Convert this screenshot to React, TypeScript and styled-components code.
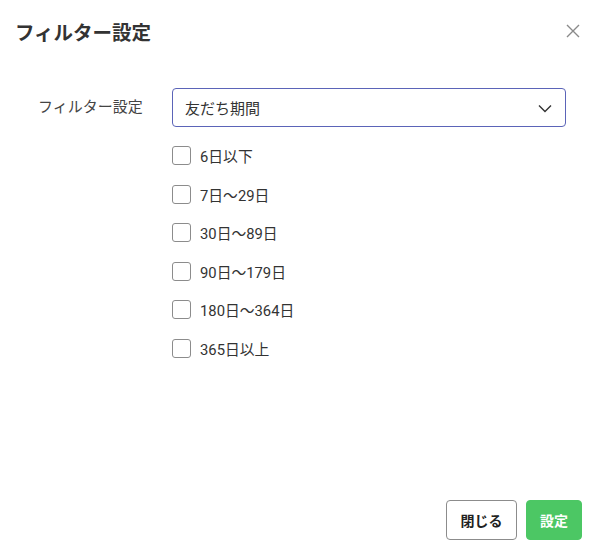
import styled, { createGlobalStyle } from "styled-components";

const GlobalStyle = createGlobalStyle`
  html, body {
    margin: 0;
    padding: 0;
    background: #ffffff;
  }
  body {
    font-family: Roboto, "Noto Sans CJK JP", sans-serif;
    color: #333333;
  }
`;

const Modal = styled.div`
  width: 598px;
  height: 551px;
  display: flex;
  flex-direction: column;
  background: #ffffff;
  box-sizing: border-box;
`;

const Header = styled.div`
  height: 62px;
  display: flex;
  align-items: center;
  justify-content: space-between;
  padding: 0 16px 0 15px;
  box-sizing: border-box;
`;

const Title = styled.h1`
  margin: 0;
  font-size: 19.5px;
  font-weight: 700;
  color: #333333;
`;

const CloseButton = styled.button`
  border: none;
  background: none;
  padding: 0;
  width: 18px;
  height: 18px;
  display: flex;
  align-items: center;
  justify-content: center;
  color: #8a8a8a;
  cursor: pointer;
`;

const Body = styled.div`
  flex: 1;
  padding: 26px 32px 0 38px;
`;

const FormRow = styled.div`
  display: flex;
  align-items: flex-start;
`;

const Label = styled.div`
  width: 134px;
  flex-shrink: 0;
  height: 39px;
  line-height: 39px;
  font-size: 15px;
  color: #444444;
`;

const Field = styled.div`
  flex: 1;
  display: flex;
  flex-direction: column;
`;

const Select = styled.div`
  height: 39px;
  box-sizing: border-box;
  border: 1px solid #5b64b8;
  border-radius: 4px;
  display: flex;
  align-items: center;
  justify-content: space-between;
  padding: 0 12px 0 12px;
  font-size: 15px;
  color: #333333;
`;

const OptionList = styled.div`
  display: flex;
  flex-direction: column;
  gap: 19.5px;
  padding-top: 19px;
`;

const Option = styled.label`
  display: flex;
  align-items: center;
  gap: 9px;
  height: 19px;
  font-size: 14.8px;
  color: #333333;
`;

const Box = styled.span`
  width: 19px;
  height: 19px;
  flex-shrink: 0;
  box-sizing: border-box;
  border: 1px solid #8c8c8c;
  border-radius: 3px;
  background: #ffffff;
`;

const Footer = styled.div`
  display: flex;
  justify-content: flex-end;
  gap: 9px;
  padding: 0 16px 11px 0;
`;

const Button = styled.button<{ $primary?: boolean }>`
  height: 40px;
  padding: 0 ${(p) => (p.$primary ? "13px" : "13.5px")};
  border-radius: 4px;
  font-family: Roboto, "Noto Sans CJK JP", sans-serif;
  font-size: 14px;
  font-weight: 700;
  box-sizing: border-box;
  border: 1px solid ${(p) => (p.$primary ? "#4cc764" : "#8c8c8c")};
  background: ${(p) => (p.$primary ? "#4cc764" : "#ffffff")};
  color: ${(p) => (p.$primary ? "#ffffff" : "#222222")};
  cursor: pointer;
`;

const options = [
  "6日以下",
  "7日〜29日",
  "30日〜89日",
  "90日〜179日",
  "180日〜364日",
  "365日以上",
];

const App = () => {
  return (
    <>
      <GlobalStyle />
      <Modal>
        <Header>
          <Title>フィルター設定</Title>
          <CloseButton aria-label="close">
            <svg width="14" height="14" viewBox="0 0 14 14" fill="none" stroke="currentColor" strokeWidth="1.4">
              <path d="M1 1 13 13M13 1 1 13" />
            </svg>
          </CloseButton>
        </Header>
        <Body>
          <FormRow>
            <Label>フィルター設定</Label>
            <Field>
              <Select>
                <span>友だち期間</span>
                <svg width="16" height="16" viewBox="0 0 16 16" fill="none" stroke="#333" strokeWidth="1.4">
                  <path d="M2 5.5 8 11.5 14 5.5" />
                </svg>
              </Select>
              <OptionList>
                {options.map((o) => (
                  <Option key={o}>
                    <Box />
                    {o}
                  </Option>
                ))}
              </OptionList>
            </Field>
          </FormRow>
        </Body>
        <Footer>
          <Button>閉じる</Button>
          <Button $primary>設定</Button>
        </Footer>
      </Modal>
    </>
  );
};

export default App;
